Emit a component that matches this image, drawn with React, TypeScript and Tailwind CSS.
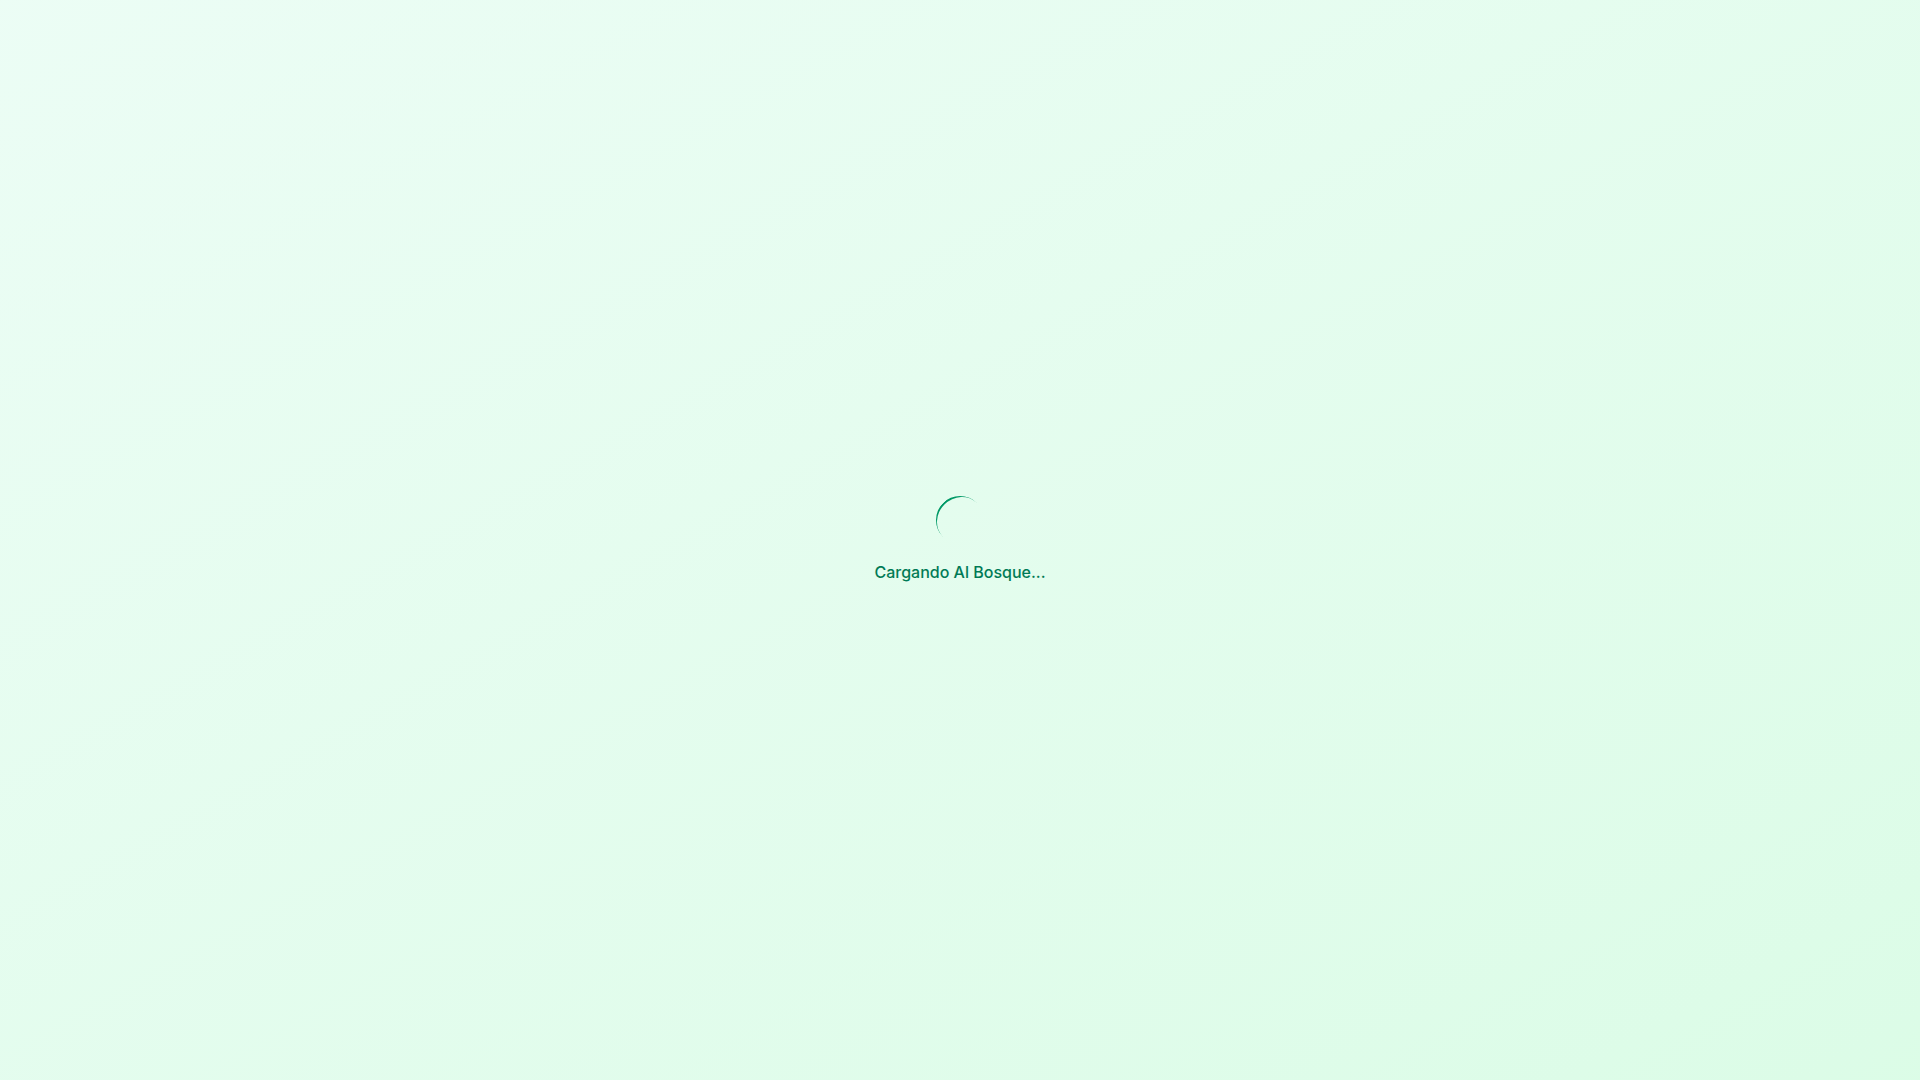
import React from "react";

export default function App() {
  return (
    <div
      className="min-h-screen w-full flex items-center justify-center bg-gradient-to-br from-emerald-50 to-green-100"
      style={{ fontFamily: "Inter, 'Noto Sans', sans-serif" }}
    >
      <div className="flex flex-col items-center">
        <div className="w-12 h-12 rounded-full border-t-2 border-emerald-600 -rotate-45 mb-4" />
        <p className="text-base font-medium text-emerald-700">Cargando Al Bosque...</p>
      </div>
    </div>
  );
}
